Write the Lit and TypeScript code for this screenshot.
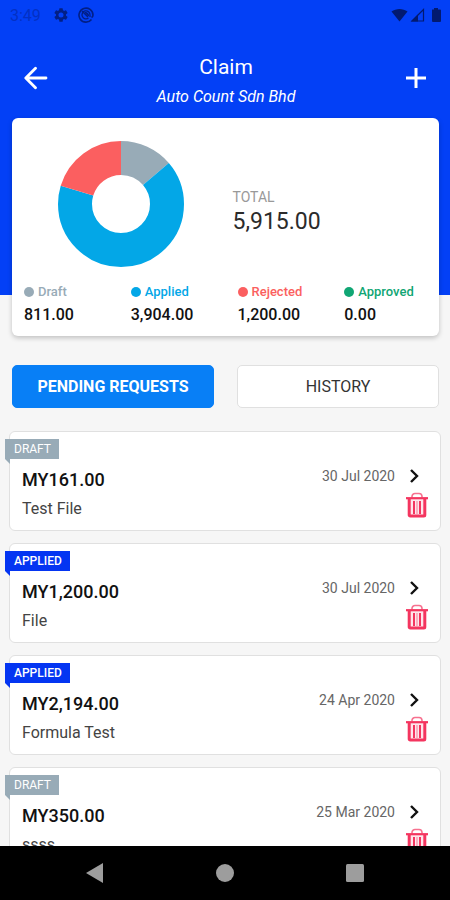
import { LitElement, html, css, svg } from "lit";
import { customElement, property, state } from "lit/decorators.js";
import { classMap } from "lit/directives/class-map.js";

type Status = "draft" | "applied" | "rejected" | "approved";

interface Slice {
  status: Status;
  label: string;
  amount: number;
}

interface Claim {
  status: Status;
  amount: number;
  title: string;
  date: string;
}

const money = (value: number): string =>
  value.toLocaleString("en-US", { minimumFractionDigits: 2, maximumFractionDigits: 2 });

const SLICES: Slice[] = [
  { status: "draft", label: "Draft", amount: 811 },
  { status: "applied", label: "Applied", amount: 3904 },
  { status: "rejected", label: "Rejected", amount: 1200 },
  { status: "approved", label: "Approved", amount: 0 },
];

const CLAIMS: Claim[] = [
  { status: "draft", amount: 161, title: "Test File", date: "30 Jul 2020" },
  { status: "applied", amount: 1200, title: "File", date: "30 Jul 2020" },
  { status: "applied", amount: 2194, title: "Formula Test", date: "24 Apr 2020" },
  { status: "draft", amount: 350, title: "ssss", date: "25 Mar 2020" },
];

const base = css`
  * {
    box-sizing: border-box;
  }
  svg {
    display: block;
  }
  button {
    font: inherit;
    color: inherit;
    border: 0;
    padding: 0;
    margin: 0;
    background: none;
    cursor: pointer;
  }
`;

@customElement("status-bar")
export class StatusBar extends LitElement {
  static styles = [
    base,
    css`
      :host {
        display: flex;
        justify-content: space-between;
        align-items: center;
        height: 30px;
        padding: 0 8px 0 10px;
        color: #0330c4;
        font-size: 16px;
      }
      .group {
        display: flex;
        align-items: center;
      }
      .left {
        gap: 11px;
      }
      .right {
        gap: 2px;
        color: #021a70;
      }
      .marks {
        display: flex;
        gap: 10px;
        padding-left: 2px;
        color: #021f86;
      }
    `,
  ];

  render() {
    return html`
      <div class="group left">
        <span>3:49</span>
        <div class="marks">
          <svg width="14" height="16" viewBox="2 1 20 22" fill="currentColor" aria-hidden="true">
            <path
              d="M19.14 12.94c.04-.3.06-.61.06-.94s-.02-.64-.07-.94l2.03-1.58a.49.49 0 0 0 .12-.61l-1.92-3.32a.49.49 0 0 0-.59-.22l-2.39.96c-.5-.38-1.03-.7-1.62-.94l-.36-2.54a.48.48 0 0 0-.48-.41h-3.84a.48.48 0 0 0-.47.41l-.36 2.54c-.59.24-1.13.57-1.62.94l-2.39-.96a.48.48 0 0 0-.59.22L2.74 8.87a.48.48 0 0 0 .12.61l2.03 1.58c-.05.3-.09.63-.09.94s.02.64.07.94l-2.03 1.58a.49.49 0 0 0-.12.61l1.92 3.32c.12.22.37.29.59.22l2.39-.96c.5.38 1.03.7 1.62.94l.36 2.54c.05.24.24.41.48.41h3.84c.24 0 .44-.17.47-.41l.36-2.54c.59-.24 1.13-.56 1.62-.94l2.39.96c.22.08.47 0 .59-.22l1.92-3.32a.48.48 0 0 0-.12-.61zM12 15.6a3.6 3.6 0 1 1 0-7.2 3.6 3.6 0 0 1 0 7.2z"
            />
          </svg>
          <svg width="16" height="16" viewBox="0 0 16 16" fill="none" stroke="currentColor" aria-hidden="true">
            <path d="M13.500 12.500A7 7 0 1 1 15 8c0 1-.5 2-1.500 2.400" stroke-width="1.600" />
            <path d="M10.500 11A4 4 0 1 1 12 8v2" stroke-width="1.300" />
            <path d="M4 4l6 6" stroke-width="1.400" />
            <path d="M7 5.500a3 3 0 0 1 3.500 3.500z" fill="currentColor" />
          </svg>
        </div>
      </div>
      <div class="group right">
        <svg width="17" height="14" viewBox="0 0 17 14" fill="currentColor" aria-hidden="true">
          <path d="M.5 3.500C5 0 12 0 16.500 3.500L8.500 13.500z" />
        </svg>
        <svg width="15" height="14" viewBox="0 0 15 14" aria-hidden="true">
          <path d="M2 13L13.500 1.500V13z" fill="none" stroke="currentColor" stroke-width="1.200" />
          <path d="M1 13.500L8 6.500V13.500z" fill="currentColor" />
        </svg>
        <svg width="15" height="14" viewBox="0 0 15 14" fill="currentColor" aria-hidden="true">
          <path d="M5 1.500h2V0h4v1.500h2a1 1 0 0 1 1 1V13a1 1 0 0 1-1 1H6a1 1 0 0 1-1-1z" />
        </svg>
      </div>
    `;
  }
}

@customElement("claim-summary")
export class ClaimSummary extends LitElement {
  @property({ attribute: false }) slices: Slice[] = [];

  static styles = [
    base,
    css`
      :host {
        display: block;
        padding: 23px 0 10px;
        background: #fff;
        border-radius: 6px;
        box-shadow: 0 2px 5px rgba(0, 0, 0, 0.22);
      }
      .overview {
        display: grid;
        grid-template-columns: 1fr 1fr;
        align-items: center;
      }
      .chart {
        justify-self: center;
        width: 126px;
        height: 126px;
        margin-left: 4px;
      }
      .total {
        padding: 16px 0 0 7px;
      }
      .caption {
        font-size: 14px;
        line-height: 20px;
        color: #999;
      }
      .sum {
        font-size: 23px;
        line-height: 30px;
        color: #2b2b2b;
      }
      .legend {
        display: grid;
        grid-template-columns: repeat(4, 1fr);
        margin: 15px 0 0;
      }
      .entry {
        padding-left: 12px;
      }
      dt {
        display: flex;
        align-items: center;
        gap: 4px;
        font-size: 13px;
        line-height: 20px;
        font-weight: 500;
      }
      .dot {
        width: 10px;
        height: 10px;
        border-radius: 50%;
        background: currentColor;
      }
      dd {
        margin: 2px 0 0;
        font-size: 16px;
        line-height: 22px;
        font-weight: 500;
        color: #111;
      }
      .draft {
        color: #98abb7;
      }
      .applied {
        color: #03a7e7;
      }
      .rejected {
        color: #fb5f60;
      }
      .approved {
        color: #10a674;
      }
    `,
  ];

  private get total(): number {
    return this.slices.reduce((sum, slice) => sum + slice.amount, 0);
  }

  private arcs() {
    let start = 0;
    return this.slices
      .filter((slice) => slice.amount > 0)
      .map((slice) => {
        const share = (slice.amount / this.total) * 100;
        const arc = svg`<circle class=${slice.status} cx="63" cy="63" r="46" pathLength="100"
          fill="none" stroke="currentColor" stroke-width="34"
          stroke-dasharray="${share} ${100 - share}" stroke-dashoffset=${-start}
          transform="rotate(-90 63 63)" />`;
        start += share;
        return arc;
      });
  }

  render() {
    return html`
      <div class="overview">
        <svg class="chart" viewBox="0 0 126 126" role="img" aria-label="Claims by status">${this.arcs()}</svg>
        <div class="total">
          <div class="caption">TOTAL</div>
          <div class="sum">${money(this.total)}</div>
        </div>
      </div>
      <dl class="legend">
        ${this.slices.map(
          (slice) => html`
            <div class="entry">
              <dt class=${slice.status}><span class="dot"></span>${slice.label}</dt>
              <dd>${money(slice.amount)}</dd>
            </div>
          `
        )}
      </dl>
    `;
  }
}

@customElement("claim-card")
export class ClaimCard extends LitElement {
  @property({ attribute: false }) claim!: Claim;

  static styles = [
    base,
    css`
      :host {
        display: flex;
        justify-content: space-between;
        position: relative;
        height: 100px;
        padding: 34px 12px 0 12px;
        background: #fff;
        border: 1px solid #e0e0e0;
        border-radius: 6px;
      }
      .ribbon {
        position: absolute;
        top: 7px;
        left: -5px;
        padding: 0 8px 0 9px;
        font-size: 12px;
        line-height: 20px;
        color: #fff;
      }
      .ribbon::after {
        content: "";
        position: absolute;
        top: 100%;
        left: 0;
        width: 5px;
        height: 5px;
        background: inherit;
        clip-path: polygon(0 0, 100% 0, 100% 100%);
      }
      .draft {
        background: #98abb7;
      }
      .applied {
        background: #0435f2;
        font-weight: 500;
      }
      .amount {
        margin: 0;
        font-size: 18px;
        line-height: 28px;
        font-weight: 500;
        color: #111;
      }
      .title {
        margin: 0;
        font-size: 16px;
        line-height: 30px;
        color: #444;
      }
      .side {
        display: flex;
        flex-direction: column;
        align-items: flex-end;
      }
      .when {
        display: flex;
        align-items: center;
        gap: 12px;
        height: 20px;
        font-size: 14px;
        color: #666;
      }
      .open {
        width: 21px;
        color: #111;
      }
      .delete {
        margin-top: 6px;
        color: #f4355f;
      }
    `,
  ];

  render() {
    const { status, amount, title, date } = this.claim;
    return html`
      <span class="ribbon ${status}">${status.toUpperCase()}</span>
      <div>
        <h2 class="amount">MY${money(amount)}</h2>
        <p class="title">${title}</p>
      </div>
      <div class="side">
        <div class="when">
          <time>${date}</time>
          <button class="open" aria-label="Open claim">
            <svg width="14" height="16" viewBox="0 0 14 16" fill="none" stroke="currentColor" stroke-width="2.400">
              <path d="M4 2l6 6-6 6" />
            </svg>
          </button>
        </div>
        <button class="delete" aria-label="Delete claim">
          <svg width="22" height="26" viewBox="0 0 22 26" fill="none" stroke="currentColor">
            <path d="M6 5.500V4.500a3 3 0 0 1 3-3h4a3 3 0 0 1 3 3v1" stroke-width="1.600" opacity=".7" />
            <path d="M0 6.200h22" stroke-width="2.200" />
            <path d="M3.200 7v16a1 1 0 0 0 1 1h13.600a1 1 0 0 0 1-1V7" fill="currentColor" fill-opacity=".12" stroke-width="3" />
            <path d="M8 9v13M14 9v13" stroke-width="2" />
            <path d="M11 9v13" stroke-width="1.200" opacity=".5" />
          </svg>
        </button>
      </div>
    `;
  }
}

@customElement("app-root")
export class AppRoot extends LitElement {
  @state() private tab: "pending" | "history" = "pending";

  static styles = [
    base,
    css`
      :host {
        display: flex;
        flex-direction: column;
        height: 100vh;
        overflow: hidden;
        background: #f6f6f6;
        font-family: Roboto, "Liberation Sans", sans-serif;
      }
      .hero {
        flex: none;
        margin-bottom: 41px;
        background: #0340f6;
      }
      .bar {
        display: grid;
        grid-template-columns: 48px 1fr 48px;
        align-items: center;
        height: 88px;
        padding: 8px 10px 0 12px;
        color: #fff;
      }
      .icon {
        display: grid;
        place-items: center;
        height: 48px;
      }
      .heading {
        padding-top: 8px;
        text-align: center;
      }
      h1 {
        margin: 0;
        font-size: 21px;
        line-height: 30px;
        font-weight: 400;
      }
      .company {
        margin: 0;
        font-size: 16px;
        line-height: 30px;
        font-style: italic;
      }
      claim-summary {
        margin: 0 11px -41px 12px;
      }
      .tabs {
        flex: none;
        display: grid;
        grid-template-columns: 1fr 1fr;
        gap: 23px;
        padding: 29px 11px 23px 12px;
      }
      .tab {
        height: 43px;
        border: 1px solid #e0e0e0;
        border-radius: 5px;
        background: #fff;
        color: #333;
        font-size: 16px;
      }
      .tab.active {
        border-color: #087ff6;
        background: #087ff6;
        color: #fff;
        font-weight: 700;
      }
      main {
        flex: 1;
        min-height: 0;
        overflow: hidden;
        display: flex;
        flex-direction: column;
        gap: 12px;
        padding: 0 9px;
      }
      claim-card {
        flex: none;
      }
      nav {
        flex: none;
        display: grid;
        grid-template-columns: repeat(3, 1fr);
        place-items: center;
        height: 54px;
        padding: 0 30px;
        background: #000;
        color: #9d9d9d;
      }
    `,
  ];

  render() {
    return html`
      <header class="hero">
        <status-bar></status-bar>
        <div class="bar">
          <button class="icon" aria-label="Back">
            <svg width="24" height="24" viewBox="0 0 24 24" fill="none" stroke="currentColor" stroke-width="2.800" stroke-linecap="round" stroke-linejoin="round">
              <path d="M22 12H2M11.500 2.200L1.800 12l9.700 9.800" />
            </svg>
          </button>
          <div class="heading">
            <h1>Claim</h1>
            <p class="company">Auto Count Sdn Bhd</p>
          </div>
          <button class="icon" aria-label="Add claim">
            <svg width="22" height="22" viewBox="0 0 22 22" fill="none" stroke="currentColor" stroke-width="3">
              <path d="M11 1v20M1 11h20" />
            </svg>
          </button>
        </div>
        <claim-summary .slices=${SLICES}></claim-summary>
      </header>
      <div class="tabs">
        <button class=${classMap({ tab: true, active: this.tab === "pending" })} @click=${() => (this.tab = "pending")}>
          PENDING REQUESTS
        </button>
        <button class=${classMap({ tab: true, active: this.tab === "history" })} @click=${() => (this.tab = "history")}>
          HISTORY
        </button>
      </div>
      <main>${CLAIMS.map((claim) => html`<claim-card .claim=${claim}></claim-card>`)}</main>
      <nav>
        <button aria-label="System back">
          <svg width="18" height="20" viewBox="0 0 18 20" fill="currentColor"><path d="M0 10L17 0v20z" /></svg>
        </button>
        <button aria-label="Home">
          <svg width="18" height="18" viewBox="0 0 18 18" fill="currentColor"><circle cx="9" cy="9" r="9" /></svg>
        </button>
        <button aria-label="Recent apps">
          <svg width="18" height="18" viewBox="0 0 18 18" fill="currentColor"><rect width="18" height="18" rx="1.500" /></svg>
        </button>
      </nav>
    `;
  }
}
